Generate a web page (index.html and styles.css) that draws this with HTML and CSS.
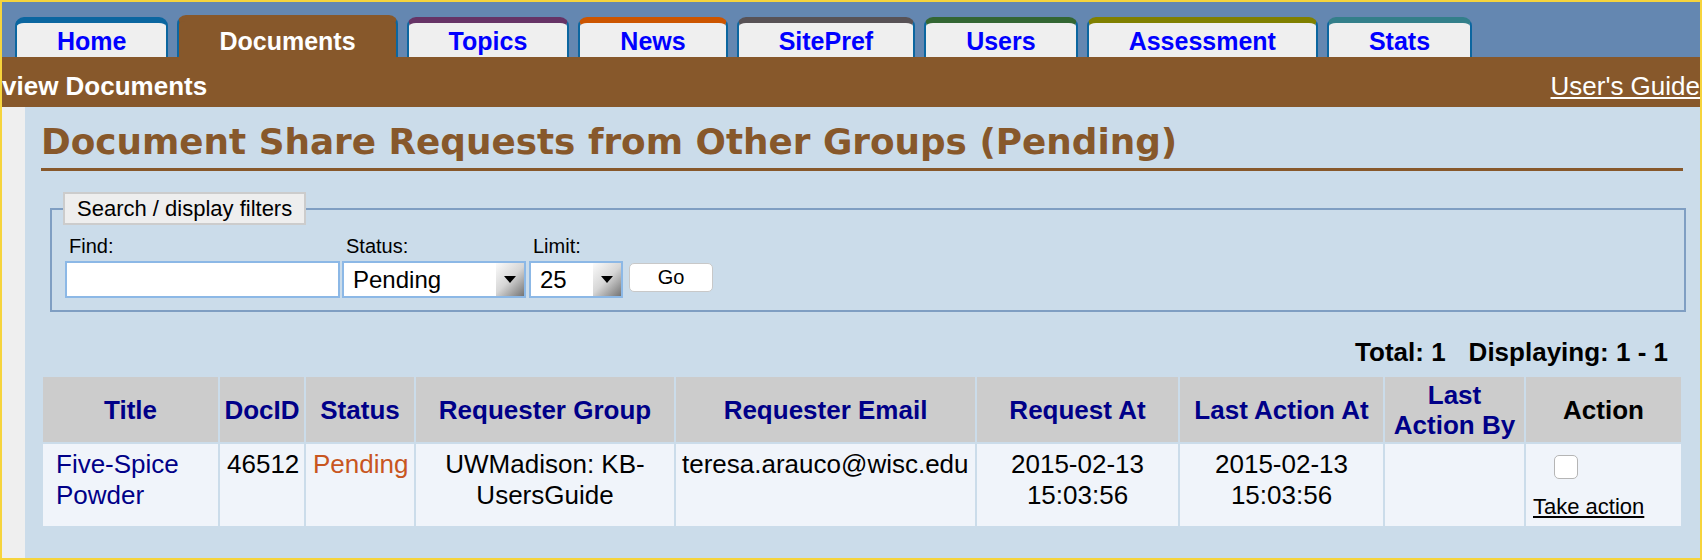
FILE: index.html
```html
<!DOCTYPE html>
<html lang="en">
<head>
    <meta charset="UTF-8">
    <meta name="viewport" content="width=device-width, initial-scale=1.0">
    <title>Document Share Requests</title>
    <link rel="stylesheet" href="styles.css">
</head>
<body>
<div class="frame">
    <div class="tabbar">
        <a class="tab tab-home" href="#">Home</a>
        <a class="tab active" href="#">Documents</a>
        <a class="tab tab-topics" href="#">Topics</a>
        <a class="tab tab-news" href="#">News</a>
        <a class="tab tab-sitepref" href="#">SitePref</a>
        <a class="tab tab-users" href="#">Users</a>
        <a class="tab tab-assessment" href="#">Assessment</a>
        <a class="tab tab-stats" href="#">Stats</a>
    </div>
    <div class="subbar">
        <span class="subbar-title">view Documents</span>
        <a class="guide" href="#">User's Guide</a>
    </div>
    <div class="main">
        <div class="side"></div>
        <div class="content">
            <h1 class="page-title">Document Share Requests from Other Groups (Pending)</h1>

            <fieldset class="filters">
                <legend>Search / display filters</legend>
                <div class="field">
                    <label for="find">Find:</label>
                    <input type="text" id="find" class="find">
                </div>
                <div class="field">
                    <label for="status">Status:</label>
                    <span class="select-box status-box">
                        <select id="status"><option>Pending</option><option>Approved</option><option>Denied</option></select>
                        <span class="arrow"><svg width="12" height="7" viewBox="0 0 12 7"><path d="M0 0H12L6 7Z" fill="#000"/></svg></span>
                    </span>
                </div>
                <div class="field limit-field">
                    <label for="limit">Limit:</label>
                    <span class="select-box limit-box">
                        <select id="limit"><option>25</option><option>50</option><option>100</option></select>
                        <span class="arrow"><svg width="12" height="7" viewBox="0 0 12 7"><path d="M0 0H12L6 7Z" fill="#000"/></svg></span>
                    </span>
                </div>
                <button class="go">Go</button>
            </fieldset>

            <div class="totals">Total: 1<span class="shown">Displaying: 1 - 1</span></div>

            <table class="requests">
                <colgroup>
                    <col class="c-title">
                    <col class="c-docid">
                    <col class="c-status">
                    <col class="c-group">
                    <col class="c-email">
                    <col class="c-reqat">
                    <col class="c-lastat">
                    <col class="c-lastby">
                    <col class="c-action">
                </colgroup>
                <thead>
                    <tr>
                        <th><a href="#">Title</a></th>
                        <th><a href="#">DocID</a></th>
                        <th><a href="#">Status</a></th>
                        <th><a href="#">Requester Group</a></th>
                        <th><a href="#">Requester Email</a></th>
                        <th><a href="#">Request At</a></th>
                        <th><a href="#">Last Action At</a></th>
                        <th><a href="#">Last Action By</a></th>
                        <th class="plain">Action</th>
                    </tr>
                </thead>
                <tbody>
                    <tr>
                        <td class="title-cell"><a href="#">Five-Spice Powder</a></td>
                        <td class="nowrap">46512</td>
                        <td class="nowrap pending">Pending</td>
                        <td class="center">UWMadison: KB-UsersGuide</td>
                        <td class="nowrap email">teresa.arauco@wisc.edu</td>
                        <td class="center">2015-02-13 15:03:56</td>
                        <td class="center">2015-02-13 15:03:56</td>
                        <td></td>
                        <td class="action-cell">
                            <input type="checkbox" class="pick">
                            <a class="take" href="#">Take action</a>
                        </td>
                    </tr>
                </tbody>
            </table>
        </div>
    </div>
</div>
</body>
</html>
```

FILE: styles.css
```css
body {
    margin: 0;
    font-family: "Liberation Sans", Arial, Helvetica, sans-serif;
}
.frame {
    box-sizing: border-box;
    height: 560px;
    border: 2px solid #f6d43c;
    display: flex;
    flex-direction: column;
    overflow: hidden;
    background-color: #cbdcea;
}

/* top tabs */
.tabbar {
    background-color: #6487b1;
    height: 55px;
    display: flex;
    align-items: flex-end;
    gap: 9px;
    padding-left: 13px;
}
.tab {
    display: block;
    box-sizing: border-box;
    height: 40px;
    padding: 4px 40px 2px;
    border: 2px solid #0b66a0;
    border-top-width: 6px;
    border-bottom: 0;
    border-radius: 9px 9px 0 0;
    background-color: #efefef;
    color: #0000ff;
    font-size: 25px;
    font-weight: bold;
    line-height: 28px;
    text-decoration: none;
}
.tab-home { border-top-color: #0b66a0; }
.tab-topics { border-top-color: #663366; }
.tab-news { border-top-color: #cc5500; }
.tab-sitepref { border-top-color: #585256; }
.tab-users { border-top-color: #336633; }
.tab-assessment { border-top-color: #808000; }
.tab-stats { border-top-color: #337f8a; }
.tab.active {
    height: 42px;
    padding-top: 6px;
    border-top-color: #87582b;
    background-color: #87582b;
    color: white;
}

.subbar {
    box-sizing: border-box;
    height: 50px;
    padding: 15px 0 7px;
    background-color: #87582b;
    color: white;
    display: flex;
    justify-content: space-between;
    align-items: baseline;
    font-size: 26px;
    line-height: 28px;
}
.subbar-title {
    font-weight: bold;
}
.guide {
    color: white;
}

/* page body */
.main {
    flex: 1;
    display: flex;
}
.side {
    width: 23px;
    background-color: #efefef;
}
.content {
    flex: 1;
    padding: 14px 17px 0 16px;
}
.page-title {
    margin: 0;
    padding-bottom: 5px;
    border-bottom: 3px solid #87582b;
    color: #87582b;
    font-family: "DejaVu Sans", Verdana, sans-serif;
    font-size: 35.8px;
    font-weight: bold;
    line-height: 42px;
}

/* filters */
.filters {
    margin: 21px -3px 0 9px;
    padding: 10px 12px 12px 13px;
    border: 2px solid #7f9ec2;
    display: flex;
    align-items: flex-end;
    gap: 2px;
}
.filters legend {
    margin-left: -2px;
    padding: 2px 12px;
    border: 2px solid #cccccc;
    background-color: #eeeeee;
    font-size: 22px;
    line-height: 25px;
}
.field label {
    display: block;
    padding-left: 4px;
    margin-bottom: 3px;
    font-size: 20px;
    line-height: 23px;
}
.find {
    box-sizing: border-box;
    width: 275px;
    height: 37px;
    margin: 0;
    border: 2px solid #8cb8e6;
    font-size: 22px;
    display: block;
}
.select-box {
    box-sizing: border-box;
    height: 37px;
    border: 2px solid #8cb8e6;
    background-color: white;
    display: flex;
}
.status-box { width: 184px; }
.limit-box { width: 94px; }
.limit-field { margin-left: 1px; }
.select-box select {
    flex: 1;
    min-width: 0;
    appearance: none;
    border: none;
    outline: none;
    background: transparent;
    padding: 0 0 0 9px;
    font-family: inherit;
    font-size: 24px;
    color: black;
}
.arrow {
    width: 28px;
    display: flex;
    align-items: center;
    justify-content: center;
    background: linear-gradient(135deg, #fbfbfb 0%, #d6d6d6 50%, #747474 100%);
}
.go {
    box-sizing: border-box;
    width: 84px;
    height: 29px;
    margin: 0 0 6px 4px;
    border: 1px solid #c8c8c8;
    border-radius: 5px;
    background-color: white;
    font-family: inherit;
    font-size: 20px;
    color: black;
}

.totals {
    margin-top: 25px;
    padding-right: 15px;
    text-align: right;
    font-size: 26px;
    font-weight: bold;
    line-height: 30px;
}
.totals .shown {
    margin-left: 23px;
}

/* results table */
.requests {
    margin-top: 8px;
    width: 1642px;
    table-layout: fixed;
    border-spacing: 2px;
}
.c-title { width: 175px; }
.c-docid { width: 84px; }
.c-status { width: 108px; }
.c-group { width: 258px; }
.c-email { width: 299px; }
.c-reqat { width: 201px; }
.c-lastat { width: 203px; }
.c-lastby { width: 139px; }
.c-action { width: 155px; }
.requests thead tr {
    height: 65px;
}
.requests th {
    padding: 2px 4px;
    background-color: #cccccc;
    font-size: 26px;
    line-height: 30px;
    vertical-align: middle;
}
.requests th a {
    color: #000088;
    text-decoration: none;
}
.requests td {
    padding: 5px 7px 7px;
    background-color: #f0f4fa;
    font-size: 26px;
    line-height: 31px;
    vertical-align: top;
}
.requests .title-cell {
    padding-left: 13px;
}
.title-cell a {
    color: #000088;
    text-decoration: none;
}
.nowrap { white-space: nowrap; }
.center { text-align: center; }
.pending { color: #c8561f; }
.requests .email { padding-left: 6px; padding-right: 4px; }
.pick {
    display: block;
    appearance: none;
    box-sizing: border-box;
    width: 24px;
    height: 24px;
    margin: 6px 0 15px 21px;
    border: 1px solid #b5b5b5;
    border-radius: 5px;
    background-color: white;
}
.take {
    display: block;
    color: black;
    font-size: 22px;
    line-height: 25px;
}
```
